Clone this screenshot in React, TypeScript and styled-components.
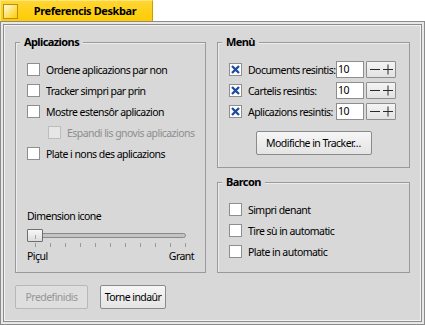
import React from "react";
import styled, { createGlobalStyle } from "styled-components";

const GlobalStyle = createGlobalStyle`
  html, body {
    margin: 0;
    padding: 0;
    background: #ffffff;
  }
  body {
    font-family: "Noto Sans", "DejaVu Sans", sans-serif;
    font-size: 10.5px;
    color: #000000;
  }
`;

const Screen = styled.div`
  width: 425px;
  height: 325px;
  display: flex;
  flex-direction: column;
  overflow: hidden;
`;

// Window tab
const Tab = styled.div`
  width: 153px;
  height: 21px;
  box-sizing: border-box;
  display: flex;
  align-items: center;
  background: linear-gradient(#ffd633, #ffcb00);
  border-top: 1px solid #ffe680;
  border-left: 1px solid #ffe680;
  border-right: 1px solid #c99e00;
`;

const TabIcon = styled.span`
  flex: none;
  width: 15px;
  height: 15px;
  margin-left: 2px;
  box-sizing: border-box;
  border: 1px solid #b89200;
  background: linear-gradient(135deg, #fffbe6 0%, #ffe066 55%, #ffcb00 100%);
`;

const TabTitle = styled.span`
  flex: 1;
  text-align: center;
  font-size: 11px;
  font-weight: 700;
  letter-spacing: -0.4px;
  line-height: 14px;
`;

const Window = styled.div`
  flex: 1;
  box-sizing: border-box;
  background: #d8d8d8;
  border: 1px solid #8c8c8c;
  box-shadow: inset 0 0 0 2px #e8e8e8, inset 0 0 0 3px #8c8c8c,
    inset 0 0 0 4px #f2f2f2;
  padding: 20px 14px 15px 14px;
  display: flex;
  flex-direction: column;
`;

const MainRow = styled.div`
  flex: 1;
  display: flex;
  gap: 11px;
`;

const Column = styled.div`
  width: 193px;
  display: flex;
  flex-direction: column;
  gap: 14px;
`;

const GroupBox = styled.div<{ $width?: number; $pad: string }>`
  ${(p) => (p.$width ? `width: ${p.$width}px;` : "")}
  box-sizing: border-box;
  border: 1px solid #9a9a9a;
  box-shadow: inset 1px 1px 0 #ececec;
  display: flex;
  flex-direction: column;
  padding: ${(p) => p.$pad};
`;

const Legend = styled.div`
  align-self: flex-start;
  height: 14px;
  line-height: 14px;
  margin: -8px 0 0 -7px;
  padding: 0 4px;
  background: #d8d8d8;
  font-size: 11px;
  font-weight: 700;
  letter-spacing: -0.6px;
`;

const Rows = styled.div`
  display: flex;
  flex-direction: column;
  padding-top: 10px;
`;

const Row = styled.div<{ $indent?: number }>`
  height: 21px;
  display: flex;
  align-items: center;
  padding-left: ${(p) => p.$indent ?? 0}px;
`;

const Box = styled.span<{ $disabled?: boolean }>`
  flex: none;
  width: 13px;
  height: 13px;
  box-sizing: border-box;
  border: 1px solid ${(p) => (p.$disabled ? "#bdbdbd" : "#8e8e8e")};
  background: ${(p) => (p.$disabled ? "#e6e6e6" : "#ffffff")};
  display: flex;
  align-items: center;
  justify-content: center;
  margin-right: 6px;
`;

const Label = styled.span<{ $disabled?: boolean; $width?: number }>`
  line-height: 14px;
  white-space: nowrap;
  letter-spacing: -0.55px;
  color: ${(p) => (p.$disabled ? "#8e8e8e" : "#000000")};
  ${(p) => (p.$width ? `width: ${p.$width}px; flex: none;` : "")}
`;

const NumberField = styled.span`
  width: 28px;
  height: 17px;
  box-sizing: border-box;
  border: 1px solid #8e8e8e;
  background: #ffffff;
  line-height: 15px;
  padding-left: 1px;
  letter-spacing: -0.5px;
`;

const Stepper = styled.span`
  width: 30px;
  height: 17px;
  margin-left: 2px;
  box-sizing: border-box;
  border: 1px solid #8e8e8e;
  border-radius: 1px;
  background: linear-gradient(#f4f4f4, #e2e2e2);
  display: flex;
  align-items: center;
  justify-content: center;
`;

const Button = styled.div<{ $width: number; $disabled?: boolean }>`
  width: ${(p) => p.$width}px;
  height: 24px;
  box-sizing: border-box;
  border: 1px solid ${(p) => (p.$disabled ? "#b8b8b8" : "#8a8a8a")};
  border-radius: 2px;
  background: ${(p) =>
    p.$disabled ? "#dedede" : "linear-gradient(#f6f6f6, #e4e4e4)"};
  color: ${(p) => (p.$disabled ? "#969696" : "#000000")};
  display: flex;
  align-items: center;
  justify-content: center;
  letter-spacing: -0.55px;
  white-space: nowrap;
`;

const TrackerButton = styled(Button)`
  align-self: center;
  margin-top: 9px;
`;

// Slider
const SliderBlock = styled.div`
  margin-top: auto;
  display: flex;
  flex-direction: column;
`;

const SliderBody = styled.div`
  position: relative;
  width: 159px;
  height: 13px;
  margin-top: 6px;
  display: flex;
  align-items: center;
`;

const Track = styled.div`
  width: 100%;
  height: 5px;
  box-sizing: border-box;
  border: 1px solid #8a8a8a;
  border-radius: 0 3px 3px 0;
  background: #c4c4c4;
`;

const Thumb = styled.div`
  position: absolute;
  left: 0;
  top: 0;
  width: 16px;
  height: 13px;
  box-sizing: border-box;
  border: 1px solid #6e6e6e;
  border-radius: 1px;
  background: linear-gradient(#f8f8f8, #dcdcdc);
  display: flex;
  justify-content: center;
  align-items: flex-end;
  &::after {
    content: "";
    width: 1px;
    height: 4px;
    margin-bottom: 2px;
    background: #a8a8a8;
  }
`;

const Ticks = styled.div`
  width: 159px;
  height: 4px;
  margin-top: 1px;
  box-sizing: border-box;
  padding-left: 8px;
  display: flex;
  justify-content: space-between;
`;

const Tick = styled.span`
  width: 1px;
  height: 4px;
  background: #9a9a9a;
`;

const ScaleLabels = styled.div`
  margin-top: 2px;
  display: flex;
  justify-content: space-between;
  line-height: 14px;
  letter-spacing: -0.55px;
`;

const ButtonRow = styled.div`
  margin-top: 12px;
  display: flex;
  gap: 12px;
`;

const Check = ({ checked, disabled }: { checked?: boolean; disabled?: boolean }) => (
  <Box $disabled={disabled}>
    {checked && (
      <svg width="9" height="9" viewBox="0 0 9 9">
        <path d="M1 1 L8 8 M8 1 L1 8" stroke="#1d4c9c" strokeWidth="2.3" />
      </svg>
    )}
  </Box>
);

const StepIcons = () => (
  <svg width="24" height="11" viewBox="0 0 24 11">
    <path d="M1 5.5 H11 M14 5.5 H24 M19 0.5 V10.5" stroke="#2a2a2a" strokeWidth="1" />
  </svg>
);

const appOptions = [
  { label: "Ordene aplicazions par non" },
  { label: "Tracker simpri par prin" },
  { label: "Mostre estensôr aplicazion" },
  { label: "Espandi lis gnovis aplicazions", disabled: true, indent: 21 },
  { label: "Plate i nons des aplicazions" },
];

const menuOptions = ["Documents resintis:", "Cartelis resintis:", "Aplicazions resintis:"];
const barOptions = ["Simpri denant", "Tire sù in automatic", "Plate in automatic"];

export default function App() {
  return (
    <Screen>
      <GlobalStyle />
      <Tab>
        <TabIcon />
        <TabTitle>Preferencis Deskbar</TabTitle>
      </Tab>
      <Window>
        <MainRow>
          <GroupBox $width={191} $pad="0 11px 9px 11px">
            <Legend>Aplicazions</Legend>
            <Rows>
              {appOptions.map((o) => (
                <Row key={o.label} $indent={o.indent}>
                  <Check disabled={o.disabled} />
                  <Label $disabled={o.disabled}>{o.label}</Label>
                </Row>
              ))}
            </Rows>
            <SliderBlock>
              <Label>Dimension icone</Label>
              <SliderBody>
                <Track />
                <Thumb />
              </SliderBody>
              <Ticks>
                {Array.from({ length: 11 }).map((_, i) => (
                  <Tick key={i} />
                ))}
              </Ticks>
              <ScaleLabels>
                <span>Piçul</span>
                <span>Grant</span>
              </ScaleLabels>
            </SliderBlock>
          </GroupBox>
          <Column>
            <GroupBox $pad="0 11px 12px 11px">
              <Legend>Menù</Legend>
              <Rows>
                {menuOptions.map((label) => (
                  <Row key={label}>
                    <Check checked />
                    <Label $width={88}>{label}</Label>
                    <NumberField>10</NumberField>
                    <Stepper>
                      <StepIcons />
                    </Stepper>
                  </Row>
                ))}
              </Rows>
              <TrackerButton $width={116}>Modifiche in Tracker…</TrackerButton>
            </GroupBox>
            <GroupBox $pad="0 11px 10px 11px">
              <Legend>Barcon</Legend>
              <Rows>
                {barOptions.map((label) => (
                  <Row key={label}>
                    <Check />
                    <Label>{label}</Label>
                  </Row>
                ))}
              </Rows>
            </GroupBox>
          </Column>
        </MainRow>
        <ButtonRow>
          <Button $width={73} $disabled>
            Predefinidis
          </Button>
          <Button $width={66}>Torne indaûr</Button>
        </ButtonRow>
      </Window>
    </Screen>
  );
}
